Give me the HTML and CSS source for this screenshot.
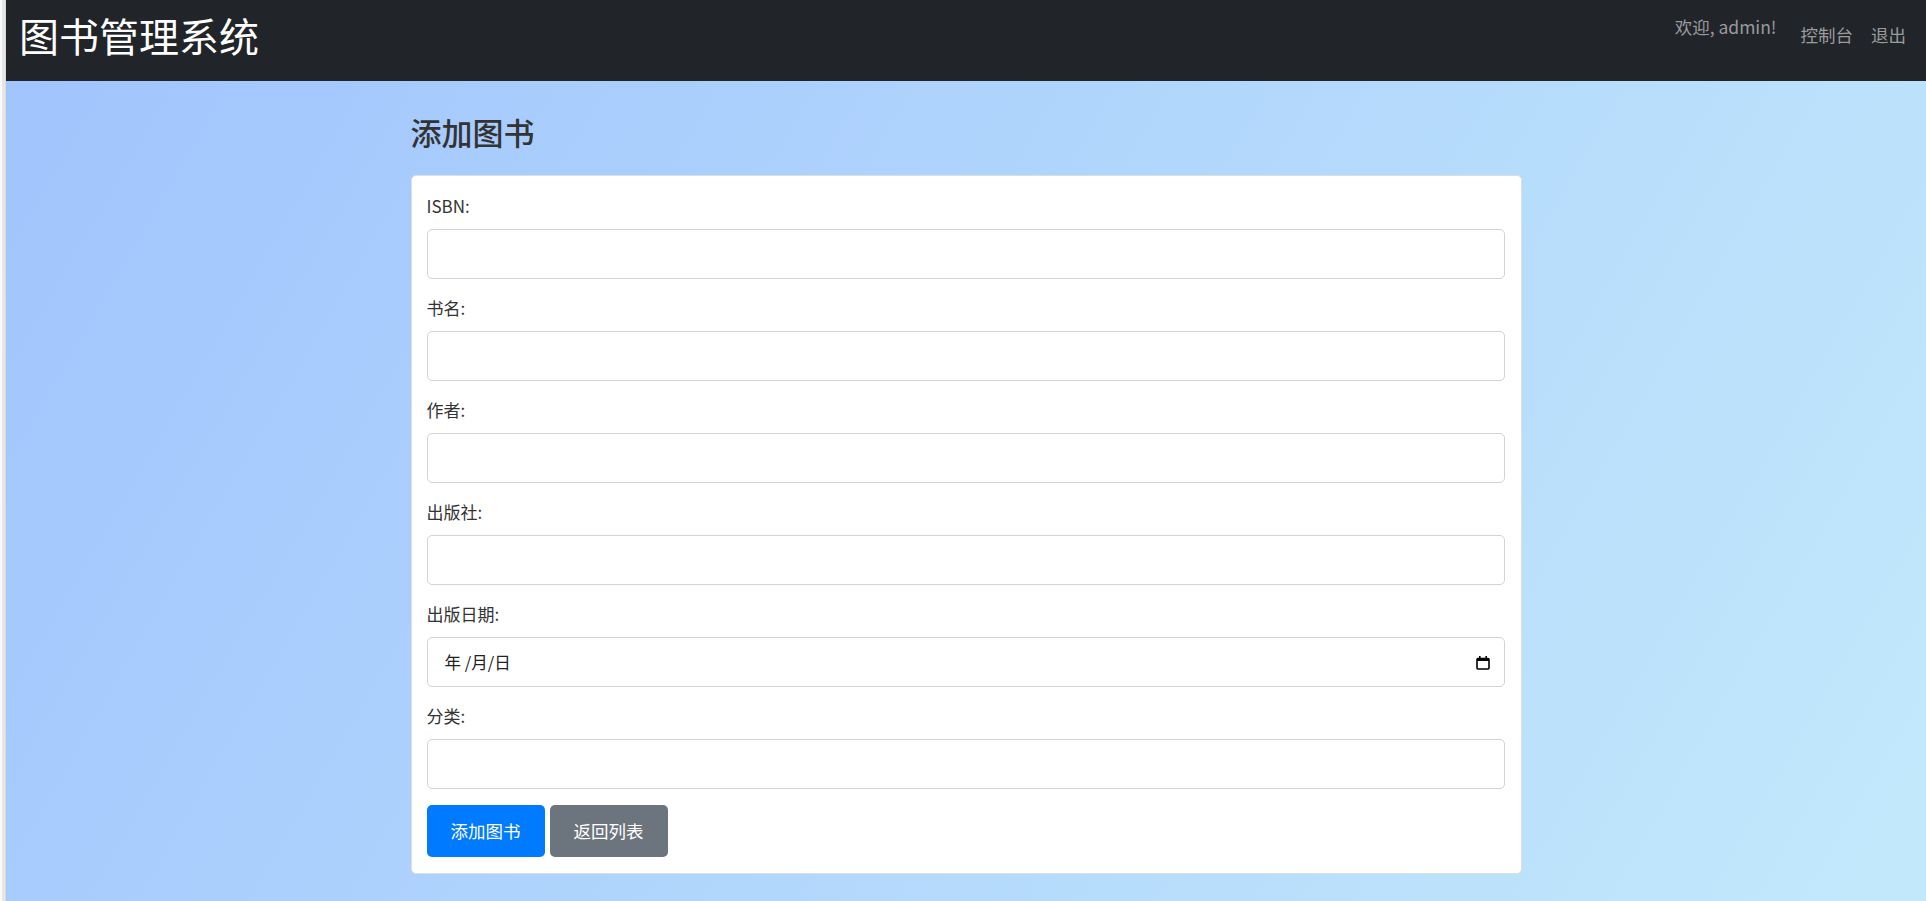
FILE: index.html
```html
<!DOCTYPE html>
<html lang="zh-CN">
<head>
<meta charset="utf-8">
<title>添加图书 - 图书管理系统</title>
<link rel="stylesheet" href="styles.css">
</head>
<body>
<div class="frame">
  <div class="edge"></div>
  <div class="app">
    <nav class="navbar">
      <a class="brand" href="#">图书管理系统</a>
      <div class="nav-right">
        <span class="welcome">欢迎, admin!</span>
        <ul class="nav-links">
          <li><a href="#">控制台</a></li>
          <li><a href="#">退出</a></li>
        </ul>
      </div>
    </nav>
    <main class="content">
      <div class="container">
        <h2 class="page-title">添加图书</h2>
        <form class="card">
          <div class="form-group">
            <label class="field-label">ISBN:</label>
            <input class="field" type="text">
          </div>
          <div class="form-group">
            <label class="field-label">书名:</label>
            <input class="field" type="text">
          </div>
          <div class="form-group">
            <label class="field-label">作者:</label>
            <input class="field" type="text">
          </div>
          <div class="form-group">
            <label class="field-label">出版社:</label>
            <input class="field" type="text">
          </div>
          <div class="form-group">
            <label class="field-label">出版日期:</label>
            <div class="field date-field">
              <span class="date-text">年 /月/日</span>
              <svg class="cal-icon" width="14" height="15" viewBox="0 0 14 15" aria-hidden="true">
                <rect x="1" y="3.5" width="12" height="10.5" rx="1" fill="none" stroke="#000" stroke-width="1.6"/>
                <rect x="1" y="3" width="12" height="3" fill="#000"/>
                <rect x="3" y="1" width="1.6" height="3" fill="#000"/>
                <rect x="9.4" y="1" width="1.6" height="3" fill="#000"/>
              </svg>
            </div>
          </div>
          <div class="form-group">
            <label class="field-label">分类:</label>
            <input class="field" type="text">
          </div>
          <div class="actions">
            <button type="button" class="btn btn-primary">添加图书</button>
            <button type="button" class="btn btn-secondary">返回列表</button>
          </div>
        </form>
      </div>
    </main>
  </div>
</div>
</body>
</html>
```

FILE: styles.css
```css
* { box-sizing: border-box; }

html, body {
  margin: 0;
  padding: 0;
  height: 100%;
}

body {
  font-family: "Noto Sans CJK SC", "Noto Sans", sans-serif;
  color: #333;
  overflow: hidden;
}

.frame {
  display: flex;
  min-height: 100vh;
}

.edge {
  width: 6px;
  flex: 0 0 6px;
  background: linear-gradient(to right, #fafafa 0, #fafafa 2px, #e6e6e6 2px, #e6e6e6 5px, #d9d9d9 5px);
}

.app {
  flex: 1;
  display: flex;
  flex-direction: column;
}

.navbar {
  height: 81px;
  background: #212529;
  display: flex;
  justify-content: space-between;
  align-items: flex-start;
  padding: 0 11px 0 13px;
}

.brand {
  margin-top: 12px;
  font-size: 40px;
  line-height: 47px;
  color: #fff;
  text-decoration: none;
}

.nav-right {
  display: flex;
  align-items: flex-start;
}

.welcome {
  margin-top: 14px;
  margin-right: 15px;
  font-size: 17.5px;
  line-height: 26px;
  color: #999a9c;
}

.nav-links {
  list-style: none;
  margin: 22px 0 0;
  padding: 0;
  display: flex;
}

.nav-links a {
  display: block;
  padding: 0 9px;
  font-size: 17.5px;
  line-height: 26px;
  color: #9a9b9d;
  text-decoration: none;
}

.content {
  flex: 1;
  background: linear-gradient(120deg, #a1c4fd 0%, #c2e9fb 100%);
  padding-top: 32px;
}

.container {
  width: 1111px;
  margin: 0 auto;
}

.page-title {
  margin: 0 0 24px;
  font-size: 31px;
  line-height: 38px;
  font-weight: 500;
  color: #333;
}

.card {
  display: block;
  background: #fff;
  border: 1px solid #dedede;
  border-radius: 5px;
  padding: 17px 16px 16px 15px;
  margin: 0;
}

.form-group {
  margin-bottom: 16px;
}

.field-label {
  display: block;
  font-size: 17px;
  line-height: 26px;
  margin-bottom: 10px;
  color: #333;
}

.field {
  display: block;
  width: 100%;
  height: 50px;
  border: 1px solid #ced4da;
  border-radius: 5px;
  background: #fff;
  padding: 0 16px;
  font-family: inherit;
  font-size: 17px;
  color: #333;
  outline: none;
}

.date-field {
  display: flex;
  align-items: center;
  justify-content: space-between;
  padding: 0 14px 0 17px;
}

.date-text {
  font-size: 16.5px;
  line-height: 24px;
  color: #222;
}

.cal-icon {
  display: block;
}

.actions {
  display: flex;
  gap: 5px;
  margin-top: 1px;
}

.btn {
  font-family: inherit;
  font-size: 17.5px;
  line-height: 28px;
  padding: 12px 24px;
  border: none;
  border-radius: 5px;
  color: #fff;
  cursor: pointer;
}

.btn-primary { background: #007bff; }
.btn-secondary { background: #6c757d; }
```
